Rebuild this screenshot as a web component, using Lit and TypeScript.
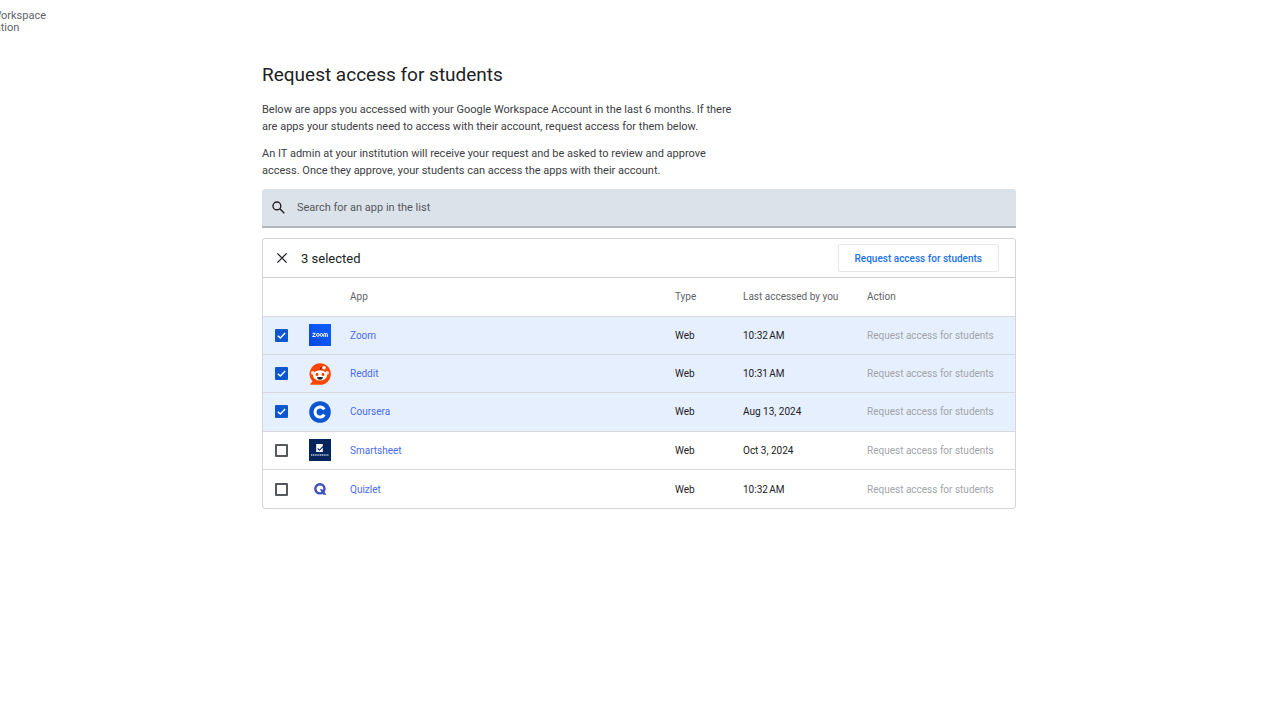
import { LitElement, html, css, svg, nothing } from "lit";
import { customElement, state } from "lit/decorators.js";
import { classMap } from "lit/directives/class-map.js";

interface AppEntry {
  id: string;
  name: string;
  type: string;
  accessed: string;
  selected: boolean;
}

const REQUEST_LABEL = "Request access for students";

const logos: Record<string, unknown> = {
  zoom: svg`
    <defs>
      <linearGradient id="zoom-fill" x1="0" y1="1" x2="1" y2="0">
        <stop offset="0" stop-color="#0845dc"></stop>
        <stop offset="0.5" stop-color="#0b55f5"></stop>
        <stop offset="1" stop-color="#0a5cff"></stop>
      </linearGradient>
    </defs>
    <rect width="22" height="22" fill="url(#zoom-fill)"></rect>
    <g fill="none" stroke="#ffffff" stroke-width="1">
      <path d="M3.5 9.3H6.3L3.6 12.5H6.6"></path>
      <circle cx="8.8" cy="10.9" r="1.4"></circle>
      <circle cx="12.4" cy="10.9" r="1.4"></circle>
      <path d="M14.8 12.9V10.4Q14.8 9.4 15.7 9.4T16.6 10.4V12.9M16.6 10.4Q16.6 9.4 17.5 9.4T18.4 10.4V12.9"></path>
    </g>`,
  reddit: svg`
    <path d="M11 0.2A10.8 10.8 0 1 1 11 21.8H1.8Q0.6 21.6 1.5 20.6L3.6 18.5A10.8 10.8 0 0 1 11 0.2Z" fill="#ff4500"></path>
    <circle cx="3.9" cy="9.8" r="1.9" fill="#ffe3da"></circle>
    <circle cx="18.1" cy="9.8" r="1.9" fill="#ffe3da"></circle>
    <ellipse cx="11" cy="12.4" rx="7" ry="5.2" fill="#ffffff"></ellipse>
    <path d="M11 7.2Q11 4 14 4.3" fill="none" stroke="#5b1a0a" stroke-width="0.9"></path>
    <circle cx="15" cy="4.7" r="1.8" fill="#ffffff"></circle>
    <ellipse cx="8" cy="11.4" rx="1.4" ry="1.7" fill="#ff4500"></ellipse>
    <ellipse cx="14" cy="11.4" rx="1.4" ry="1.7" fill="#ff4500"></ellipse>
    <path d="M7.8 14.2Q11 13.6 14.2 14.2Q13.4 16.8 11 16.8T7.8 14.2Z" fill="#1d1f22"></path>`,
  coursera: svg`
    <circle cx="11" cy="11" r="10.8" fill="#0a56d3"></circle>
    <path d="M15.3 8.4A5 5 0 1 0 15.3 13.6" fill="none" stroke="#ffffff" stroke-width="3"></path>`,
  smartsheet: svg`
    <rect width="22" height="22" fill="#04245c"></rect>
    <path d="M7.2 5H13.8V7L10.4 10.4L9 9L8.4 9.8L10.3 12L13.8 8.4V13H7.2Z" fill="#ffffff"></path>
    <path d="M2 16H20" stroke="#b9c2d4" stroke-width="1.5" stroke-dasharray="1.3 0.5"></path>`,
  quizlet: svg`
    <circle cx="10.9" cy="10.8" r="4.6" fill="none" stroke="#3c4fbd" stroke-width="2.4"></circle>
    <path d="M10.8 11.2H13.4L17.4 16.8H14.4Z" fill="#3c4fbd"></path>`,
};

@customElement("workspace-mark")
class WorkspaceMark extends LitElement {
  static styles = css`
    :host {
      display: flex;
      justify-content: flex-end;
      width: 46px;
      overflow: hidden;
      color: #5f6368;
      font-size: 11px;
      line-height: 12px;
    }
    .name {
      flex: none;
      white-space: nowrap;
    }
  `;

  render() {
    return html`<div class="name">Google Workspace<br />for Education</div>`;
  }
}

@customElement("app-root")
class AppRoot extends LitElement {
  static styles = css`
    :host {
      display: block;
      min-height: 100vh;
      background: #ffffff;
      color: #202124;
      font-family: Roboto, "Liberation Sans", sans-serif;
      font-size: 11px;
      line-height: 17px;
    }
    * {
      box-sizing: border-box;
    }
    .top {
      padding: 10px 0 0;
    }
    .page {
      max-width: 804px;
      margin: 0 auto;
      padding: 28px 26px 24px 24px;
    }
    .title {
      margin: 0;
      font-size: 19px;
      line-height: 26px;
      font-weight: 400;
    }
    .intro {
      max-width: 484px;
      margin: 0 0 10px;
      color: #3c4043;
    }
    .title + .intro {
      margin-top: 13px;
    }
    .search {
      display: flex;
      align-items: center;
      gap: 12px;
      height: 39px;
      padding: 0 10px;
      border-bottom: 2px solid #b3b8be;
      border-radius: 3px 3px 0 0;
      background: #dce2ea;
    }
    .glyph {
      flex: none;
      display: block;
      fill: none;
      stroke: #202124;
    }
    .query {
      flex: 1;
      min-width: 0;
      padding: 0;
      border: 0;
      outline: 0;
      background: transparent;
      color: #202124;
      font: inherit;
    }
    .query::placeholder {
      color: #54585d;
      opacity: 1;
    }
    .card {
      margin-top: 10px;
      border: 1px solid #d3d5d8;
      border-radius: 3px;
      overflow: hidden;
    }
    .toolbar {
      display: flex;
      align-items: center;
      gap: 12px;
      height: 39px;
      padding: 0 16px 0 12px;
      border-bottom: 1px solid #c9cbce;
    }
    .clear {
      padding: 0;
      border: 0;
      background: none;
    }
    .count {
      flex: 1;
      font-size: 13px;
    }
    .request {
      height: 28px;
      padding: 0 16px;
      border: 1px solid #e6e7e9;
      border-radius: 2px;
      background: #ffffff;
      color: #1a73e8;
      font: inherit;
      font-size: 10px;
      font-weight: 500;
    }
    .apps {
      width: 100%;
      height: 230px;
      border-collapse: collapse;
      table-layout: fixed;
      text-align: left;
      font-size: 10px;
    }
    .apps th {
      height: 38px;
      padding: 0;
      font-weight: 400;
      color: #5f6368;
    }
    .apps td {
      height: 38px;
      padding: 0;
      border-top: 1px solid #d6dade;
    }
    .tick-col {
      width: 46px;
    }
    .logo-col {
      width: 41px;
    }
    .type-col {
      width: 68px;
    }
    .date-col {
      width: 124px;
    }
    .action-col {
      width: 148px;
    }
    .selected {
      background: #e6effd;
    }
    .tick {
      display: block;
      appearance: none;
      width: 13px;
      height: 13px;
      margin: 0 0 0 12px;
      border: 2px solid #55585c;
      border-radius: 1px;
      background: #ffffff;
    }
    .tick:checked {
      border-color: #0b57d0;
      background: #0b57d0
        url("data:image/svg+xml,%3Csvg xmlns='http://www.w3.org/2000/svg' viewBox='0 0 9 9'%3E%3Cpath d='M.8 4.7L3.3 7.1L8.2 2' fill='none' stroke='white' stroke-width='1.4'/%3E%3C/svg%3E")
        center / 9px 9px no-repeat;
    }
    .logo {
      display: block;
      width: 22px;
      height: 22px;
    }
    .link {
      color: #4a6cf0;
      text-decoration: none;
    }
    .row-request {
      display: block;
      padding: 0;
      border: 0;
      background: none;
      color: #a1a5aa;
      font: inherit;
    }
  `;

  @state() private query = "";

  @state() private apps: AppEntry[] = [
    { id: "zoom", name: "Zoom", type: "Web", accessed: "10:32\u202fAM", selected: true },
    { id: "reddit", name: "Reddit", type: "Web", accessed: "10:31\u202fAM", selected: true },
    { id: "coursera", name: "Coursera", type: "Web", accessed: "Aug 13, 2024", selected: true },
    { id: "smartsheet", name: "Smartsheet", type: "Web", accessed: "Oct 3, 2024", selected: false },
    { id: "quizlet", name: "Quizlet", type: "Web", accessed: "10:32\u202fAM", selected: false },
  ];

  private toggle(id: string) {
    this.apps = this.apps.map((a) => (a.id === id ? { ...a, selected: !a.selected } : a));
  }

  private clear() {
    this.apps = this.apps.map((a) => ({ ...a, selected: false }));
  }

  private renderRow(app: AppEntry) {
    return html`
      <tr class=${classMap({ selected: app.selected })}>
        <td>
          <input
            class="tick"
            type="checkbox"
            aria-label=${app.name}
            .checked=${app.selected}
            @change=${() => this.toggle(app.id)}
          />
        </td>
        <td><svg class="logo" viewBox="0 0 22 22" aria-hidden="true">${logos[app.id] ?? nothing}</svg></td>
        <td><a class="link" href="#${app.id}">${app.name}</a></td>
        <td>${app.type}</td>
        <td>${app.accessed}</td>
        <td><button class="row-request" type="button" ?disabled=${true}>${REQUEST_LABEL}</button></td>
      </tr>
    `;
  }

  render() {
    const count = this.apps.filter((a) => a.selected).length;
    const shown = this.apps.filter((a) => a.name.toLowerCase().includes(this.query.toLowerCase()));
    return html`
      <header class="top"><workspace-mark></workspace-mark></header>
      <main class="page">
        <h1 class="title">${REQUEST_LABEL}</h1>
        <p class="intro">
          Below are apps you accessed with your Google Workspace Account in the last 6 months. If there
          are apps your students need to access with their account, request access for them below.
        </p>
        <p class="intro">
          An IT admin at your institution will receive your request and be asked to review and approve
          access. Once they approve, your students can access the apps with their account.
        </p>
        <label class="search">
          <svg class="glyph" width="13" height="13" viewBox="0 0 13 13" stroke-width="1.4" aria-hidden="true">
            <circle cx="4.9" cy="4.9" r="3.9"></circle>
            <path d="M7.8 7.8L12.3 12.3"></path>
          </svg>
          <input
            class="query"
            type="text"
            placeholder="Search for an app in the list"
            aria-label="Search for an app in the list"
            @input=${(e: InputEvent) => (this.query = (e.target as HTMLInputElement).value)}
          />
        </label>
        <section class="card">
          <div class="toolbar">
            <button class="clear" type="button" aria-label="Clear selection" @click=${this.clear}>
              <svg class="glyph" width="14" height="14" viewBox="0 0 14 14" stroke-width="1.3" aria-hidden="true">
                <path d="M2.4 2.4L11.6 11.6M11.6 2.4L2.4 11.6"></path>
              </svg>
            </button>
            <span class="count">${count} selected</span>
            <button class="request" type="button">${REQUEST_LABEL}</button>
          </div>
          <table class="apps">
            <colgroup>
              <col class="tick-col" />
              <col class="logo-col" />
              <col />
              <col class="type-col" />
              <col class="date-col" />
              <col class="action-col" />
            </colgroup>
            <thead>
              <tr>
                <th></th>
                <th></th>
                <th scope="col">App</th>
                <th scope="col">Type</th>
                <th scope="col">Last accessed by you</th>
                <th scope="col">Action</th>
              </tr>
            </thead>
            <tbody>
              ${shown.map((a) => this.renderRow(a))}
            </tbody>
          </table>
        </section>
      </main>
    `;
  }
}
